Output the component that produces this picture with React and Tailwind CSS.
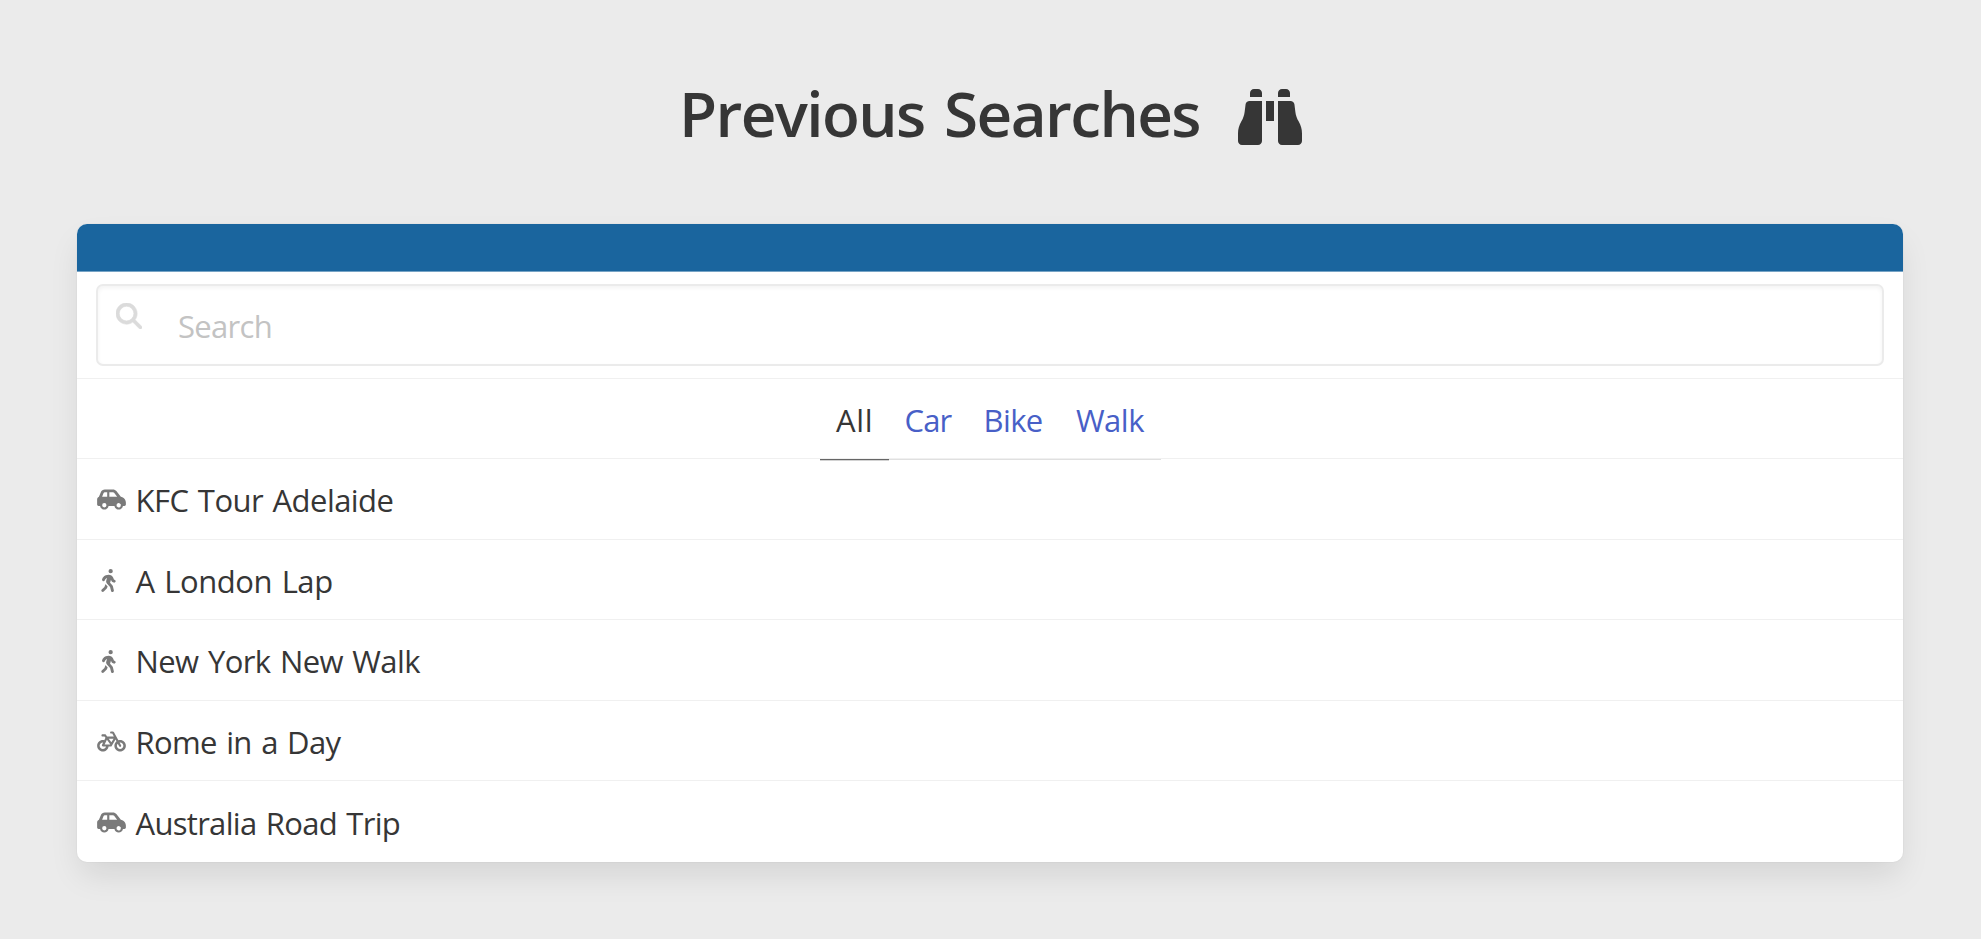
import React from "react";
import { FaBinoculars, FaMagnifyingGlass, FaCarSide, FaPersonWalking, FaBicycle } from "react-icons/fa6";

const tabs = [
  { label: "All", box: "w-[69px] pl-[16.5px] text-[#363636] border-[#666666] shadow-[0_1px_0_#d2d2d2]", text: "tracking-[0.6px]" },
  { label: "Car", box: "w-[78px] pl-[16px] text-[#485fc7] border-[#e0e0e0]", text: "tracking-[-0.9px]" },
  { label: "Bike", box: "w-[92px] pl-[17px] text-[#485fc7] border-[#e0e0e0]", text: "tracking-[-0.6px]" },
  { label: "Walk", box: "w-[102px] pl-[17.5px] text-[#485fc7] border-[#e0e0e0]", text: "tracking-[-0.5px]" },
];

const CarIcon = () => <FaCarSide className="h-[23px] w-[29px]" />;
const WalkIcon = () => <FaPersonWalking className="mr-[6px] mt-px h-[23px] w-[15px]" />;
const BikeIcon = () => <FaBicycle className="h-[23px] w-[29px]" />;

const rows = [
  { label: "KFC Tour Adelaide", Icon: CarIcon, box: "h-[81px] border-b", text: "tracking-[-0.55px]" },
  { label: "A London Lap", Icon: WalkIcon, box: "h-[80px] border-b", text: "tracking-[-0.45px]" },
  { label: "New York New Walk", Icon: WalkIcon, box: "h-[81px] border-b", text: "tracking-[-0.6px]" },
  { label: "Rome in a Day", Icon: BikeIcon, box: "h-[80px] border-b", text: "tracking-[-0.65px]" },
  { label: "Australia Road Trip", Icon: CarIcon, box: "h-[81px]", text: "tracking-[-0.7px]" },
];

export default function App() {
  return (
    <div className="h-[939px] w-[1981px] overflow-hidden bg-[#ebebeb] font-['Open_Sans',sans-serif] text-[31px] text-[#363636]">
      <header className="flex h-[224px] items-start pl-[678px] pt-[77px]">
        <h1 className="w-[560px] whitespace-nowrap pl-px text-[62px] font-semibold leading-[72px] tracking-[-1.6px] [word-spacing:5px]">
          Previous Searches
        </h1>
        <FaBinoculars className="mt-[8px] size-16" />
      </header>
      <main className="ml-[77px] h-[638px] w-[1826px] rounded-[10px] bg-white shadow-[0_16px_32px_-4px_rgba(10,10,10,0.1),0_0_0_1px_rgba(10,10,10,0.02)]">
        <div className="h-[48px] rounded-t-[10px] border-b border-[#76a3c5] bg-[#1a659e]" />
        <div className="h-[107px] border-b border-[#f0f0f0] px-[19px] pt-[12px]">
          <div className="flex h-[82px] items-start rounded-[7px] border-2 border-[#ebebeb] pl-[18px] shadow-[inset_0_2px_4px_rgba(10,10,10,0.05)]">
            <FaMagnifyingGlass className="mt-[17px] size-[26px] stroke-[12] text-[#dbdbdb]" />
            <span className="ml-[36px] mt-[16px] leading-[48px] tracking-[-0.7px] text-[#c3c3c3]">Search</span>
          </div>
        </div>
        <nav className="flex h-[80px] justify-center border-b border-[#f0f0f0]">
          {tabs.map((t) => (
            <a key={t.label} className={"h-[81px] shrink-0 border-b pt-[17px] leading-[48px] " + t.box}>
              <span className={t.text}>{t.label}</span>
            </a>
          ))}
        </nav>
        {rows.map(({ label, Icon, box, text }) => (
          <div key={label} className={"flex items-center border-[#f0f0f0] pl-[19.5px] " + box}>
            <span className="mr-[10px] flex w-[29px] items-center justify-center pt-px text-[#7a7a7a]">
              <Icon />
            </span>
            <span className={"pt-[2px] leading-[48px] [word-spacing:2px] " + text}>{label}</span>
          </div>
        ))}
      </main>
    </div>
  );
}
